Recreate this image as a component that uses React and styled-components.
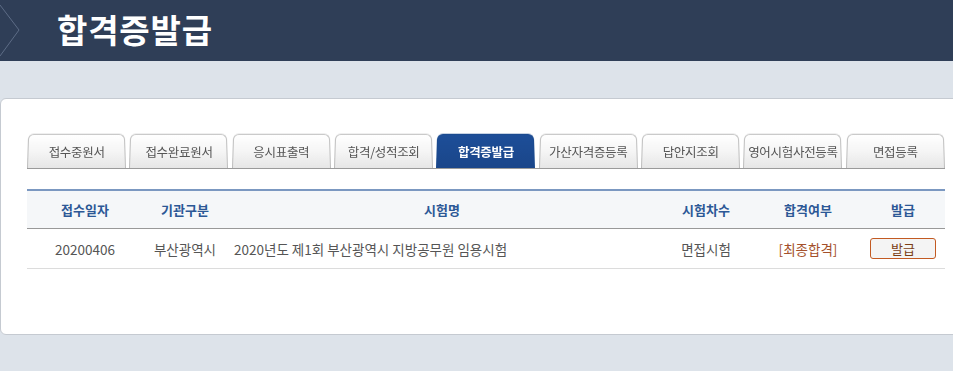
import React from 'react'
import styled, { createGlobalStyle } from 'styled-components'

const GlobalStyle = createGlobalStyle`
  html, body {
    margin: 0;
    padding: 0;
    background: #dde3ea;
    overflow: hidden;
    font-family: "Noto Sans CJK KR", "Noto Sans", sans-serif;
  }
`

const tabs = [
  '접수중원서',
  '접수완료원서',
  '응시표출력',
  '합격/성적조회',
  '합격증발급',
  '가산자격증등록',
  '답안지조회',
  '영어시험사전등록',
  '면접등록'
]

const columns = [
  { label: '접수일자', width: 116 },
  { label: '기관구분', width: 84 },
  { label: '시험명', width: 430 },
  { label: '시험차수', width: 98 },
  { label: '합격여부', width: 106 },
  { label: '발급', width: 84 }
]

const App = () => {
  return (
    <Page>
      <GlobalStyle />
      <Header>
        <Chevron width="22" height="61" viewBox="0 0 22 61">
          <polyline points="0,5 19,30 0,56" fill="none" stroke="#5d6c86" strokeWidth="1" />
        </Chevron>
        <Title>합격증발급</Title>
      </Header>

      <Card>
        <TabBar>
          {tabs.map((t) => (
            <Tab key={t} active={t === '합격증발급'}>
              <span>{t}</span>
            </Tab>
          ))}
        </TabBar>

        <Table>
          <colgroup>
            {columns.map((c) => (
              <col key={c.label} style={{ width: c.width }} />
            ))}
          </colgroup>
          <thead>
            <tr>
              {columns.map((c) => (
                <Th key={c.label}>{c.label}</Th>
              ))}
            </tr>
          </thead>
          <tbody>
            <tr>
              <Td>20200406</Td>
              <Td>부산광역시</Td>
              <Td align="left">2020년도 제1회 부산광역시 지방공무원 임용시험</Td>
              <Td>면접시험</Td>
              <Td><Result>[최종합격]</Result></Td>
              <Td><IssueButton type="button">발급</IssueButton></Td>
            </tr>
          </tbody>
        </Table>
      </Card>
    </Page>
  )
}

const Page = styled.div`
  width: 953px;
  height: 371px;
  overflow: hidden;
`

const Header = styled.header`
  position: relative;
  height: 61px;
  background: #2f3e57;
  display: flex;
  align-items: center;
  padding-left: 57px;
  box-sizing: border-box;
`

const Chevron = styled.svg`
  position: absolute;
  left: 0;
  top: 0;
`

const Title = styled.h1`
  margin: 0;
  color: #fff;
  font-size: 33px;
  font-weight: 700;
  letter-spacing: 0.8px;
  line-height: 1;
  padding-bottom: 2px;
`

const Card = styled.section`
  margin-top: 37px;
  width: 980px;
  height: 237px;
  box-sizing: border-box;
  background: #fff;
  border: 1px solid #c5cad1;
  border-radius: 6px 0 0 6px;
  padding: 34px 0 0 26px;
`

const TabBar = styled.ul`
  list-style: none;
  margin: 0;
  padding: 0;
  width: 918px;
  display: flex;
  gap: 3px;
  border-bottom: 1px solid #9a9a9a;
`

const Tab = styled.li`
  position: relative;
  flex: 1;
  height: 35px;
  display: flex;
  align-items: center;
  justify-content: center;
  font-size: 12.5px;
  color: ${(p) => (p.active ? '#fff' : '#555')};
  font-weight: ${(p) => (p.active ? 700 : 400)};
  letter-spacing: -0.3px;

  &::before {
    content: '';
    position: absolute;
    inset: 0;
    border: 1px solid ${(p) => (p.active ? '#1b4a8e' : '#bdbdbd')};
    border-bottom: none;
    border-radius: 6px 6px 0 0;
    background: ${(p) =>
      p.active
        ? 'linear-gradient(#1d4e98, #1a468a)'
        : 'linear-gradient(#ffffff 0%, #f4f4f4 55%, #e6e6e6 100%)'};
    transform: perspective(80px) rotateX(3deg);
    transform-origin: bottom;
  }

  span {
    position: relative;
    padding-top: 2px;
  }
`

const Table = styled.table`
  margin-top: 20px;
  width: 918px;
  border-collapse: collapse;
  table-layout: fixed;
  border-top: 2px solid #7b98c1;
  font-size: 13px;
`

const Th = styled.th`
  height: 37px;
  padding: 0;
  background: #f5f7f9;
  border-bottom: 1px solid #999;
  color: #2c5896;
  font-weight: 700;
  text-align: center;
`

const Td = styled.td`
  height: 39px;
  padding: 0 ${(p) => (p.align === 'left' ? '7px' : '0')};
  border-bottom: 1px solid #dcdcdc;
  color: #555;
  font-size: 13.5px;
  text-align: ${(p) => p.align || 'center'};
`

const Result = styled.span`
  color: #a4502a;
`

const IssueButton = styled.button`
  width: 66px;
  height: 21px;
  padding: 0;
  background: #f4f4f4;
  border: 1px solid #c25a22;
  border-radius: 3px;
  font-family: inherit;
  font-size: 13px;
  color: #7b3f16;
  line-height: 19px;
  cursor: pointer;
`

export default App
